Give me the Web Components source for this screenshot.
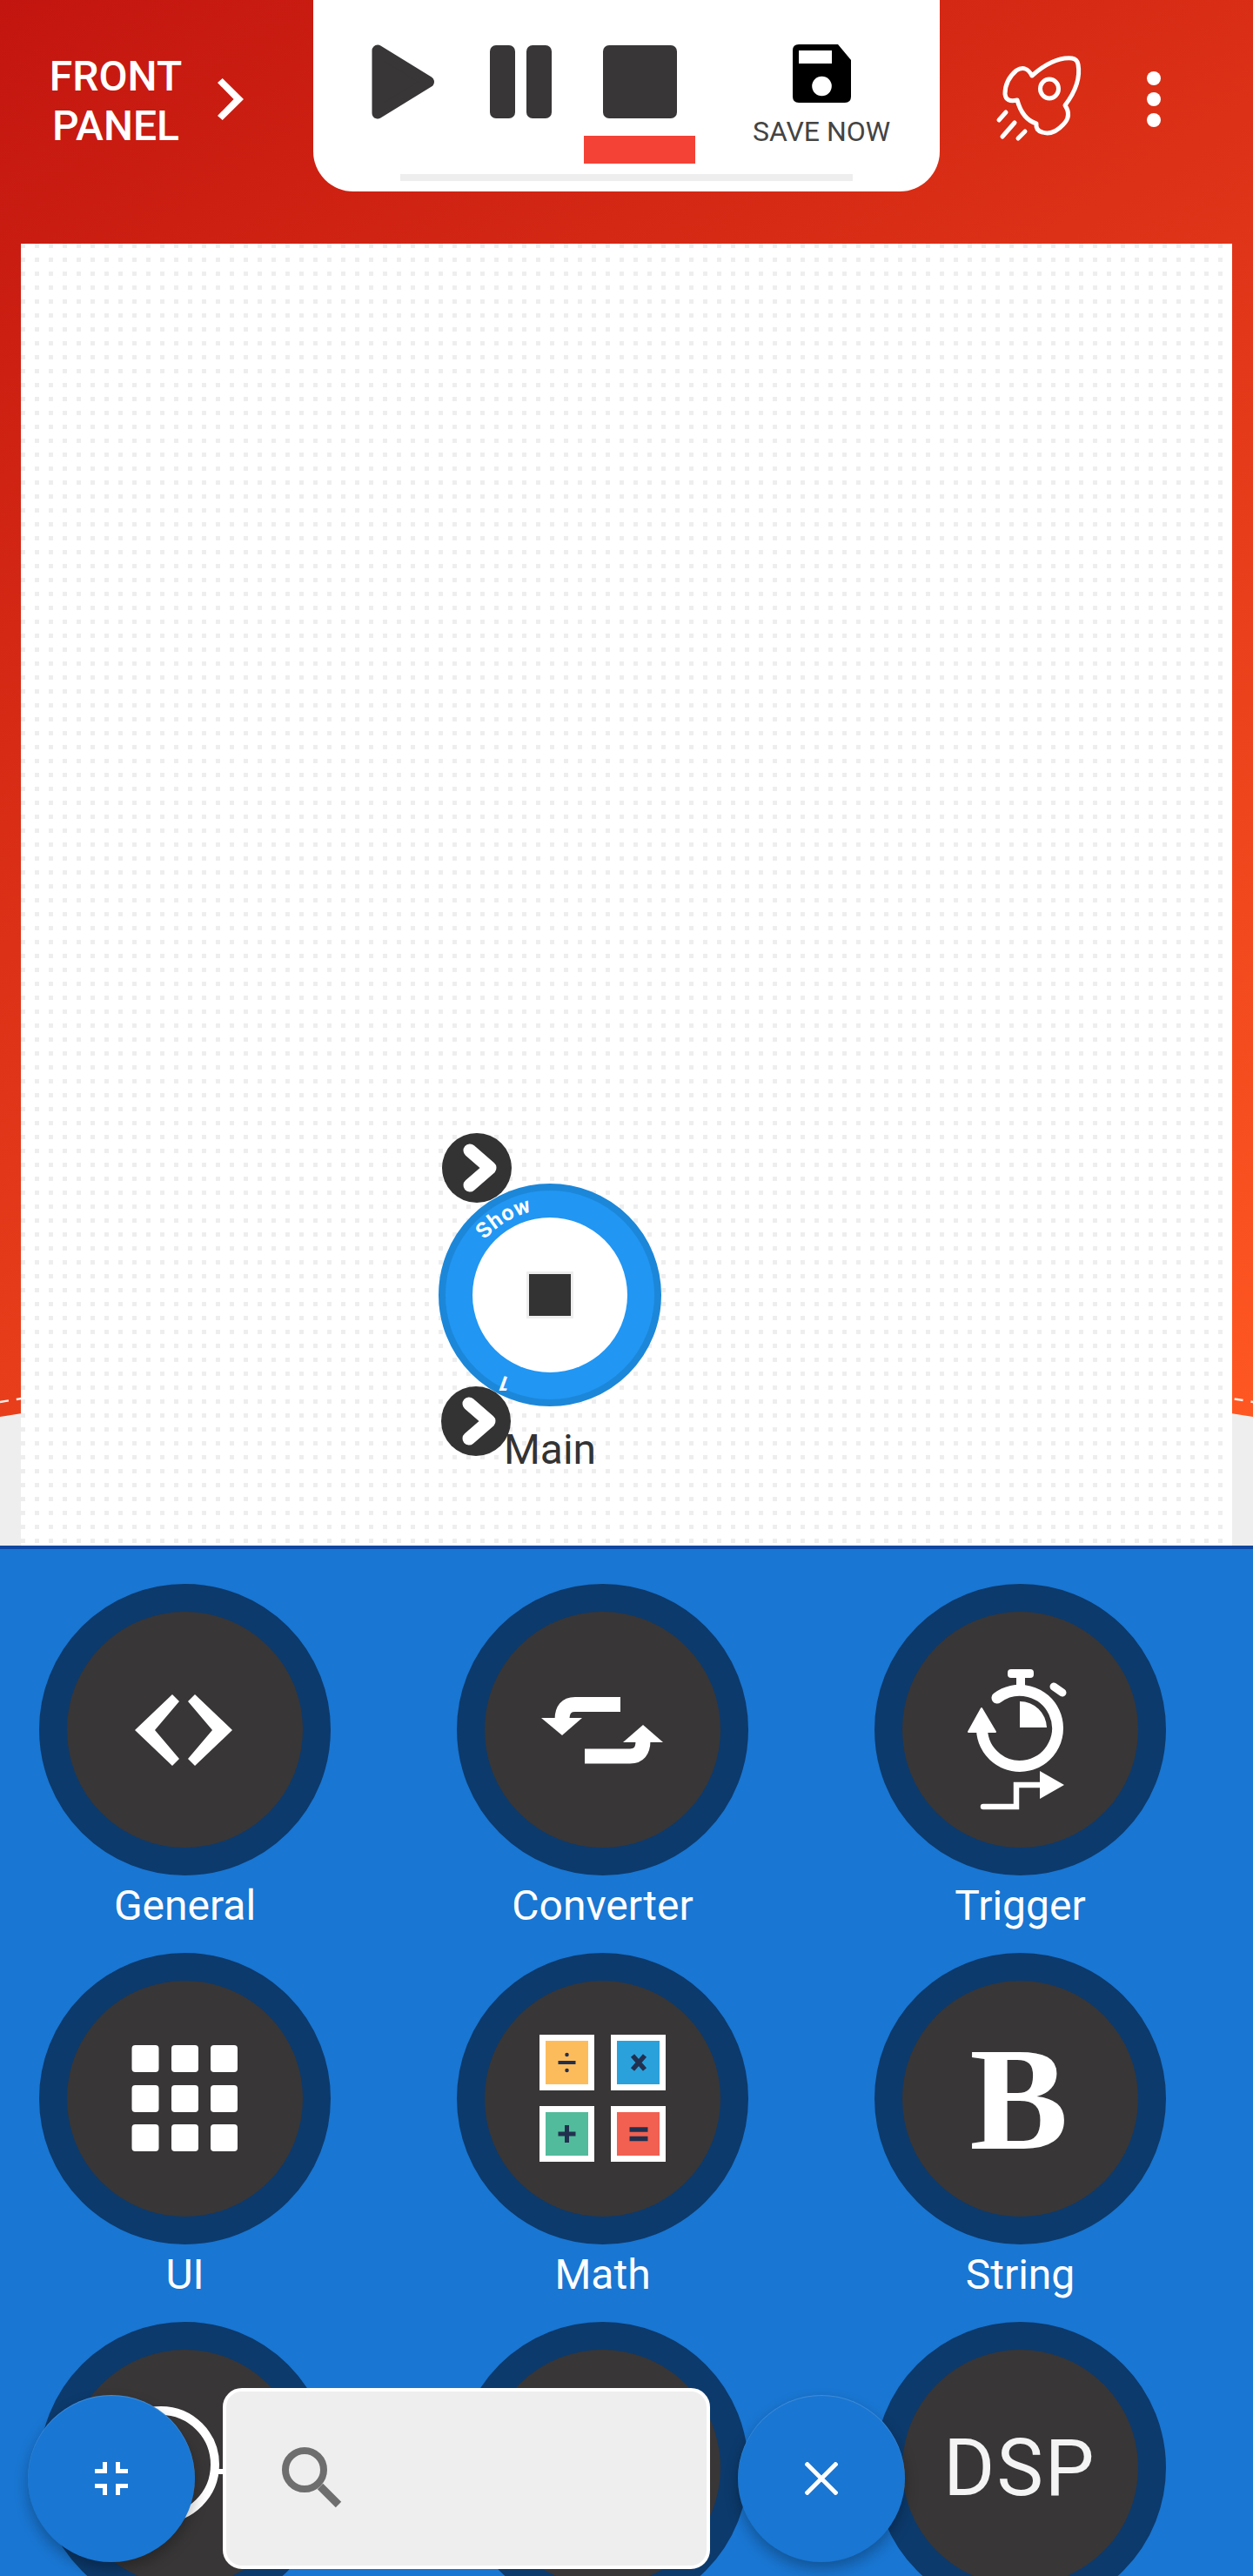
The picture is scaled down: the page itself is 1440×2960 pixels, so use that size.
<!DOCTYPE html>
<html lang="en">
<head>
<meta charset="utf-8">
<title>Front panel</title>
<style>
	html, body { margin: 0; padding: 0; background: #1976d2; }
	body { font-family: Roboto, "Liberation Sans", sans-serif; }
</style>
</head>
<body>
<app-shell>
	<top-area>
		<tool-bar></tool-bar>
		<node-canvas>
			<flow-node label="Main"></flow-node>
		</node-canvas>
	</top-area>
	<palette-grid>
		<palette-item label="General">
			<svg viewBox="32 32 271 271" width="271" height="271" fill="#fff">
				<polygon points="110,168 153,127 161,135 133,168 161,201 153,209"/>
				<polygon points="222,168 179,127 171,135 199,168 171,201 179,209"/>
			</svg>
		</palette-item>
		<palette-item label="Converter">
			<svg viewBox="32 32 271 271" width="271" height="271" fill="#fff">
				<path d="M188 138.500H136Q121 138.500 121 156" fill="none" stroke="#fff" stroke-width="17"/>
				<polygon points="97,154 144,154 121,174"/>
				<path d="M147 198H199Q214 198 214 180" fill="none" stroke="#fff" stroke-width="17"/>
				<polygon points="191,182 237,182 214,162"/>
			</svg>
		</palette-item>
		<palette-item label="Trigger">
			<svg viewBox="32 32 271 271" width="271" height="271" fill="#fff">
				<rect x="153" y="98" width="30" height="10" rx="4"/>
				<rect x="163" y="106" width="10" height="16"/>
				<path d="M141 131A43.500 43.500 0 1 1 123.500 167" fill="none" stroke="#fff" stroke-width="13" stroke-linecap="round"/>
				<polygon points="123,143 108,170 139,170" stroke="#fff" stroke-width="2" stroke-linejoin="round"/>
				<path d="M206 118L216 125" stroke="#fff" stroke-width="9" stroke-linecap="round"/>
				<path d="M167 135A31 31 0 0 1 198 165H167Z"/>
				<path d="M125 256H163V231H190" fill="none" stroke="#fff" stroke-width="6.500" stroke-linecap="round"/>
				<polygon points="190,215 218,231 190,247"/>
			</svg>
		</palette-item>
		<palette-item label="UI">
			<svg viewBox="32 32 271 271" width="271" height="271" fill="#fff">
				<rect x="106.500" y="106" width="31" height="31" rx="4"/>
				<rect x="152" y="106" width="31" height="31" rx="4"/>
				<rect x="197" y="106" width="31" height="31" rx="4"/>
				<rect x="106.500" y="152" width="31" height="31" rx="4"/>
				<rect x="152" y="152" width="31" height="31" rx="4"/>
				<rect x="197" y="152" width="31" height="31" rx="4"/>
				<rect x="106.500" y="197" width="31" height="31" rx="4"/>
				<rect x="152" y="197" width="31" height="31" rx="4"/>
				<rect x="197" y="197" width="31" height="31" rx="4"/>
			</svg>
		</palette-item>
		<palette-item label="Math">
			<svg viewBox="32 32 271 271" width="271" height="271">
				<rect x="98.500" y="97.500" width="56" height="57" fill="#fdbc5c" stroke="#fff" stroke-width="7"/>
				<rect x="180.500" y="97.500" width="56" height="57" fill="#2ba1dc" stroke="#fff" stroke-width="7"/>
				<rect x="98.500" y="179.500" width="56" height="57" fill="#52bb9b" stroke="#fff" stroke-width="7"/>
				<rect x="180.500" y="179.500" width="56" height="57" fill="#f26051" stroke="#fff" stroke-width="7"/>
				<g stroke="#22304f" stroke-width="5" fill="#22304f">
					<path d="M116.500 126H136.500" stroke-width="4"/>
					<circle cx="126.500" cy="117" r="1.500" stroke-width="1.500"/>
					<circle cx="126.500" cy="135" r="1.500" stroke-width="1.500"/>
					<path d="M202 118L216 134M216 118L202 134" stroke-width="5.500"/>
					<path d="M116.500 208H136.500M126.500 198V218"/>
					<path d="M198.500 203H219.500M198.500 213.500H219.500" stroke-width="5.500"/>
				</g>
			</svg>
		</palette-item>
		<palette-item label="String">
			<svg viewBox="32 32 271 271" width="271" height="271">
				<text x="166" y="225" text-anchor="middle" font-family="'Liberation Serif', serif" font-weight="700" font-size="170" fill="#fff">B</text>
			</svg>
		</palette-item>
		<palette-item>
			<svg viewBox="32 32 271 271" width="271" height="271">
				<circle cx="140" cy="164" r="62" fill="none" stroke="#fff" stroke-width="10"/>
				<path d="M203 172H240" stroke="#fff" stroke-width="6"/>
			</svg>
		</palette-item>
		<palette-item></palette-item>
		<palette-item>
			<svg viewBox="32 32 271 271" width="271" height="271">
				<text x="167" y="199" text-anchor="middle" font-family="Roboto, sans-serif" font-size="90" letter-spacing="2" fill="#f4f4f4">DSP</text>
			</svg>
		</palette-item>
	</palette-grid>
	<search-dock></search-dock>
</app-shell>

<script>
	(() => {
		const define = (name, template, extra) => {
			customElements.define(name, class extends HTMLElement {
				constructor() {
					super();
					this.attachShadow({ mode: 'open' }).innerHTML = template;
				}
				connectedCallback() {
					if (extra) extra(this, this.shadowRoot);
				}
			});
		};

		define('app-shell', `
			<style>
				:host { display: block; position: relative; width: 1440px; height: 2960px; overflow: hidden; font-family: Roboto, "Liberation Sans", sans-serif; }
			</style>
			<slot></slot>
		`);

		define('top-area', `
			<style>
				:host { display: flex; flex-direction: column; position: relative; height: 1776px; background: #eee; }
				.wave {
					position: absolute; left: 0; top: 0; width: 1440px; height: 1628px;
					background: linear-gradient(146deg, #c3150f, #ff5722);
					clip-path: path("M0 0H1440V1628Q720 1508 0 1628Z");
				}
				svg { position: absolute; left: 0; top: 0; }
				::slotted(*) { position: relative; }
			</style>
			<div class="wave"></div>
			<svg width="1440" height="1640" viewBox="0 0 1440 1640">
				<path d="M0 1611Q720 1491 1440 1611" fill="none" stroke="#fff" stroke-width="2.500" stroke-dasharray="10 9" opacity=".9"/>
			</svg>
			<slot></slot>
		`);

		define('tool-bar', `
			<style>
				:host { display: flex; height: 280px; color: #fff; }
				.front { width: 360px; display: flex; align-items: flex-start; box-sizing: border-box; padding: 59px 0 0 48px; }
				.front div { width: 170px; text-align: center; font-size: 48px; font-weight: 500; line-height: 57px; }
				.front svg { margin: 31px 0 0 32px; }
				.panel { width: 720px; height: 220px; background: #fff; border-radius: 0 0 46px 46px; }
				.actions { display: flex; align-items: flex-start; margin-left: 60px; padding-top: 60px; }
				.dots { display: flex; flex-direction: column; gap: 8px; margin: 22px 0 0 68px; }
				.dots i { display: block; width: 16px; height: 16px; border-radius: 50%; background: #fff; }
			</style>
			<div class="front">
				<div>FRONT<br>PANEL</div>
				<svg width="30" height="48" viewBox="250 90 30 48" fill="#fff"><polygon points="280,114 255.700,90 250,95 268.600,114 250,133 255.700,138"/></svg>
			</div>
			<transport-panel class="panel"></transport-panel>
			<div class="actions">
				<svg width="110" height="105" viewBox="1140 60 110 105" fill="none" stroke="#fff" stroke-width="5" stroke-linecap="round" stroke-linejoin="round">
					<path d="M1186 87Q1211 65 1232 67Q1238 68 1239 74Q1243 96 1224 121Q1232 133 1222 143Q1210 156 1198 152Q1190 150 1191 142Q1175 137 1169 115Q1156 118 1155 108Q1155 92 1168 81Q1179 74 1186 87Z"/>
					<ellipse cx="1206" cy="102" rx="10.500" ry="11"/>
					<path d="M1156 129L1148 138M1166 141L1152 157M1178 151L1170 159"/>
				</svg>
				<div class="dots"><i></i><i></i><i></i></div>
			</div>
		`);

		define('transport-panel', `
			<style>
				:host { display: block; box-sizing: border-box; padding-top: 51px; }
				.row { display: flex; height: 149px; align-items: flex-start; padding-left: 67px; }
				.pause { display: flex; gap: 13px; margin: 1px 0 0 63px; }
				.pause i { display: block; width: 29px; height: 84px; border-radius: 7px; background: #383637; }
				.stop { width: 128px; margin: 1px 0 0 37px; display: flex; flex-direction: column; align-items: center; }
				.stop i { display: block; width: 85px; height: 84px; border-radius: 7px; background: #383637; }
				.stop b { display: block; width: 128px; height: 32px; margin-top: 20px; background: #f44336; }
				.save { width: 158px; margin-left: 66px; display: flex; flex-direction: column; align-items: center; }
				.save span { font-size: 32px; line-height: 35px; margin-top: 16px; color: #444; white-space: nowrap; }
				.line { height: 8px; width: 520px; margin-left: 100px; background: #eee; }
			</style>
			<div class="row">
				<svg width="73" height="86" viewBox="0 0 73 86"><path d="M7 7L65.500 43L7 79Z" fill="#383637" stroke="#383637" stroke-width="13" stroke-linejoin="round"/></svg>
				<div class="pause"><i></i><i></i></div>
				<div class="stop"><i></i><b></b></div>
				<div class="save">
					<svg width="67" height="67" viewBox="0 0 67 67">
						<path d="M7 0H52L67 18V60Q67 67 60 67H7Q0 67 0 60V7Q0 0 7 0Z"/>
						<rect x="7" y="7" width="38" height="15" fill="#fff"/>
						<circle cx="33.500" cy="48" r="11.300" fill="#fff"/>
					</svg>
					<span>SAVE NOW</span>
				</div>
			</div>
			<div class="line"></div>
		`);

		define('node-canvas', `
			<style>
				:host {
					display: block; position: relative; margin: 0 24px; height: 1496px;
					background-color: #eee;
					background-image: linear-gradient(to right, transparent 5px, #fff 5px), linear-gradient(to bottom, transparent 5px, #fff 5px);
					background-size: 16px 16px;
				}
				::slotted(flow-node) { position: absolute; left: 480px; top: 1020px; }
			</style>
			<slot></slot>
		`);

		define('flow-node', `
			<style>
				:host { display: block; width: 256px; height: 400px; color: #333; }
				svg { display: block; position: absolute; left: 0; top: 0; overflow: visible; }
				.label { position: absolute; left: 0; width: 256px; top: 337px; text-align: center; font-size: 48px; line-height: 57px; }
			</style>
			<svg width="256" height="316" viewBox="0 -60 256 316">
				<defs><path id="arc" d="M53 65A98 98 0 0 1 128 30"/></defs>
				<circle cx="128" cy="128" r="124" fill="#2196f3" stroke="#1c87d9" stroke-width="8"/>
				<circle cx="128" cy="128" r="89" fill="#fff"/>
				<rect x="102.500" y="102.500" width="51" height="51" fill="#333" stroke="#eee" stroke-width="3"/>
				<text font-family="Roboto, sans-serif" font-weight="700" font-size="25" fill="#fff" letter-spacing=".8"><textPath href="#arc">Show</textPath></text>
				<text transform="translate(78 222) rotate(200)" text-anchor="middle" font-family="Roboto, sans-serif" font-weight="700" font-size="25" fill="#fff">1</text>
				<g transform="translate(44 -18)">
					<circle r="40" fill="#333"/>
					<path d="M-8 -20L15 0L-8 20" fill="none" stroke="#fff" stroke-width="15" stroke-linecap="round" stroke-linejoin="round"/>
				</g>
				<g transform="translate(43 273)">
					<circle r="40" fill="#333"/>
					<path d="M-8 -20L15 0L-8 20" fill="none" stroke="#fff" stroke-width="15" stroke-linecap="round" stroke-linejoin="round"/>
				</g>
			</svg>
			<div class="label"></div>
		`, (el, root) => { root.querySelector('.label').textContent = el.getAttribute('label'); });

		define('palette-grid', `
			<style>
				:host {
					display: grid; grid-template-columns: repeat(3, 335px); column-gap: 145px; row-gap: 25px; align-content: start;
					box-sizing: border-box; height: 1184px; overflow: hidden; padding: 40px 0 0 45px;
					background: #1976d2; border-top: 4px solid #0d47a1;
				}
			</style>
			<slot></slot>
		`);

		define('palette-item', `
			<style>
				:host { display: flex; flex-direction: column; align-items: center; color: #fff; }
				.disc { box-sizing: border-box; width: 335px; height: 335px; border: 32px solid #0c3a6c; border-radius: 50%; background: #383637; flex: none; }
				::slotted(svg) { display: block; border-radius: 50%; }
				.label { height: 58px; margin-top: 6px; font-size: 48px; line-height: 57px; white-space: nowrap; }
			</style>
			<div class="disc"><slot></slot></div>
			<div class="label"></div>
		`, (el, root) => { root.querySelector('.label').textContent = el.getAttribute('label') || ''; });

		define('search-dock', `
			<style>
				:host { position: absolute; left: 32px; top: 2744px; display: flex; align-items: center; gap: 32px; }
				.box { box-sizing: border-box; width: 560px; height: 208px; background: #eee; border: 4px solid #fff; border-radius: 22px; padding: 64px 0 0 64px; }
				.box svg { display: block; }
				.fab {
					width: 192px; height: 192px; border-radius: 50%; background: #1976d2; display: flex; align-items: center; justify-content: center;
					box-shadow: 0 8px 16px rgba(0,0,0,.28), inset 0 1px 1px rgba(255,255,255,.18);
				}
			</style>
			<div class="fab">
				<svg width="38" height="38" viewBox="0 0 38 38" fill="none" stroke="#fff" stroke-width="5">
					<path d="M11.500 0V10.500H0M26.500 0V10.500H38M11.500 38V27.500H0M26.500 38V27.500H38"/>
				</svg>
			</div>
			<div class="box">
				<svg width="80" height="80" viewBox="0 0 80 80" fill="none" stroke="#6e6e6e">
					<circle cx="26" cy="26" r="22" stroke-width="8"/>
					<path d="M44 45L65 66" stroke-width="9"/>
				</svg>
			</div>
			<div class="fab">
				<svg width="38" height="38" viewBox="0 0 38 38" fill="none" stroke="#fff" stroke-width="5">
					<path d="M1 1L37 37M37 1L1 37"/>
				</svg>
			</div>
		`);
	})()
</script>
</body>
</html>
